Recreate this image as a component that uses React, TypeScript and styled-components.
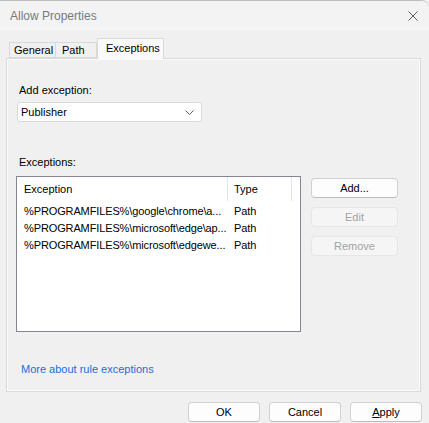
import * as React from 'react';
import styled, { createGlobalStyle } from 'styled-components';

const GlobalStyle = createGlobalStyle`
	html, body { margin: 0; padding: 0; background: #f0f0f0; }
	body { font-family: "Liberation Sans", Arial, sans-serif; font-size: 11px; color: #000; }
`;

const Window = styled.div`
	width: 429px;
	height: 423px;
	background: #f0f0f0;
	display: flex;
	flex-direction: column;
	overflow: hidden;
	border-top-right-radius: 8px;
	box-sizing: border-box;
	border-top: 1px solid #bdbdbd;
`;

const TitleBar = styled.div`
	height: 30px;
	background: #f3f3f3;
	display: flex;
	align-items: center;
	padding: 0 11px 0 10px;
	flex-shrink: 0;
	h1 {
		margin: 0;
		font-family: "Liberation Sans", Arial, sans-serif;
		font-weight: 400;
		font-size: 12px;
		color: #7a7a7a;
		flex: 1;
	}
`;

const Body = styled.div`
	flex: 1;
	display: flex;
	flex-direction: column;
	padding: 7px 8px 0 6px;
`;

const TabStrip = styled.div`
	display: flex;
	align-items: flex-end;
	height: 20px;
	padding-left: 3px;
`;

const Tab = styled.div<{ $active?: boolean; $w: number; $pad?: number }>`
	width: ${p => p.$w}px;
	height: ${p => (p.$active ? '21px' : '16px')};
	box-sizing: border-box;
	padding: ${p => (p.$active ? '3px' : '1px')} 0 0 ${p => p.$pad ?? 4}px;
	margin-bottom: ${p => (p.$active ? '-1px' : '0')};
	border: 1px solid #d9d9d9;
	border-bottom: ${p => (p.$active ? 'none' : '1px solid #d9d9d9')};
	border-left: ${p => (p.$active ? '1px solid #d9d9d9' : 'none')};
	background: ${p => (p.$active ? '#f9f9f9' : '#f0f0f0')};
	font-size: 11px;
	position: relative;
	z-index: ${p => (p.$active ? 2 : 1)};
	&:first-child { border-left: 1px solid #d9d9d9; }
`;

const Panel = styled.div`
	height: 334px;
	box-sizing: border-box;
	border: 1px solid #d9d9d9;
	box-shadow: inset 1px 1px 0 #fbfbfb, inset -1px -1px 0 #fbfbfb;
	background: #f0f0f0;
	padding: 24px 0 0 10px;
	display: flex;
	flex-direction: column;
`;

const Label = styled.div<{ $gap?: number }>`
	height: 14px;
	line-height: 14px;
	padding-left: 2px;
	margin-top: ${p => p.$gap || 0}px;
`;

const Combo = styled.div`
	margin-top: 5px;
	width: 185px;
	height: 20px;
	box-sizing: border-box;
	background: #fff;
	border: 1px solid #d9d9d9;
	border-radius: 3px;
	display: flex;
	align-items: center;
	padding: 0 7px 0 3px;
	span { flex: 1; }
`;

const ListRow = styled.div`
	display: flex;
	gap: 10px;
	margin-top: 7px;
`;

const ListBox = styled.div`
	width: 285px;
	height: 156px;
	box-sizing: border-box;
	border: 1px solid #828790;
	background: #fff;
	margin-left: -1px;
`;

const HeaderRow = styled.div`
	display: flex;
	height: 24px;
	align-items: center;
	margin-bottom: 1px;
`;

const HeaderCell = styled.div<{ $w: number }>`
	width: ${p => p.$w}px;
	box-sizing: border-box;
	padding-left: 6px;
	height: 100%;
	display: flex;
	align-items: center;
	border-right: 1px solid #e5e5e5;
	&:first-child { padding-left: 7px; }
`;

const DataRow = styled.div`
	display: flex;
	height: 17px;
	align-items: center;
`;

const Cell = styled.div<{ $w: number }>`
	width: ${p => p.$w}px;
	box-sizing: border-box;
	padding-left: 6px;
	white-space: nowrap;
	letter-spacing: -0.12px;
	&:first-child { padding-left: 7px; }
`;

const SideButtons = styled.div`
	display: flex;
	flex-direction: column;
	gap: 9px;
	padding-top: 2px;
`;

const Button = styled.button<{ $disabled?: boolean }>`
	width: 87px;
	height: 20px;
	box-sizing: border-box;
	font-family: inherit;
	font-size: 11px;
	padding: 0;
	border-radius: 4px;
	background: ${p => (p.$disabled ? '#f5f5f5' : '#fdfdfd')};
	color: ${p => (p.$disabled ? '#a3a3a3' : '#000')};
	border: 1px solid ${p => (p.$disabled ? '#e6e6e6' : '#d0d0d0')};
	border-bottom-color: ${p => (p.$disabled ? '#e6e6e6' : '#bdbdbd')};
`;

const Link = styled.a`
	margin-top: auto;
	margin-bottom: 16px;
	margin-left: 4px;
	color: #1a6fd8;
	text-decoration: none;
`;

const Footer = styled.div`
	display: flex;
	justify-content: flex-end;
	gap: 9px;
	padding-top: 10px;
	margin-right: -1px;
`;

const FooterButton = styled(Button)`
	width: 72px;
	u { text-decoration: underline; }
`;

const rows = [
	'%PROGRAMFILES%\\google\\chrome\\a...',
	'%PROGRAMFILES%\\microsoft\\edge\\ap...',
	'%PROGRAMFILES%\\microsoft\\edgewe...',
];

export default function App() {
	return (
		<>
			<GlobalStyle />
			<Window>
				<TitleBar>
					<h1>Allow Properties</h1>
					<svg width="10" height="10" viewBox="0 0 10 10">
						<path d="M0.5 0.5 L9.5 9.5 M9.5 0.5 L0.5 9.5" stroke="#5c5c5c" strokeWidth="1" />
					</svg>
				</TitleBar>
				<Body>
					<TabStrip>
						<Tab $w={47}>General</Tab>
						<Tab $w={41} $pad={6}>Path</Tab>
						<Tab $w={67} $pad={8} $active>Exceptions</Tab>
					</TabStrip>
					<Panel>
						<Label>Add exception:</Label>
						<Combo>
							<span>Publisher</span>
							<svg width="9" height="5" viewBox="0 0 9 5">
								<path d="M0.5 0.5 L4.5 4.5 L8.5 0.5" fill="none" stroke="#606060" strokeWidth="1" />
							</svg>
						</Combo>
						<Label $gap={33}>Exceptions:</Label>
						<ListRow>
							<ListBox>
								<HeaderRow>
									<HeaderCell $w={211}>Exception</HeaderCell>
									<HeaderCell $w={64}>Type</HeaderCell>
								</HeaderRow>
								{rows.map(r => (
									<DataRow key={r}>
										<Cell $w={211}>{r}</Cell>
										<Cell $w={64}>Path</Cell>
									</DataRow>
								))}
							</ListBox>
							<SideButtons>
								<Button>Add...</Button>
								<Button $disabled>Edit</Button>
								<Button $disabled>Remove</Button>
							</SideButtons>
						</ListRow>
						<Link href="#">More about rule exceptions</Link>
					</Panel>
					<Footer>
						<FooterButton>OK</FooterButton>
						<FooterButton>Cancel</FooterButton>
						<FooterButton><u>A</u>pply</FooterButton>
					</Footer>
				</Body>
			</Window>
		</>
	);
}
